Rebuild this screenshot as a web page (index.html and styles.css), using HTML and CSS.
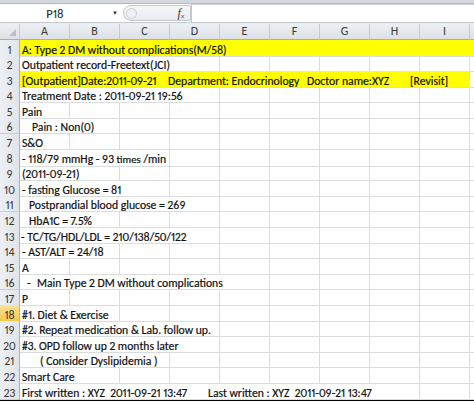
FILE: index.html
```html
<!DOCTYPE html>
<html>
<head>
<meta charset="utf-8">
<link rel="stylesheet" href="styles.css">
</head>
<body>
<div class="app">
  <div class="topstrip"></div>
  <div class="fbar">
    <div class="namebox"><span class="nb-text">P18</span><span class="nb-arrow">&#9660;</span></div>
    <div class="fxgroup">
      <span class="grip"></span>
      <span class="fx">f<sub>x</sub></span>
    </div>
    <div class="finput"></div>
  </div>
  <div class="sep"></div>
  <div class="sheet">
    <div class="row hdr">
      <div class="corner"><span class="tri"></span></div>
      <div class="ch">A</div><div class="ch">B</div><div class="ch">C</div><div class="ch">D</div><div class="ch">E</div><div class="ch">F</div><div class="ch">G</div><div class="ch">H</div><div class="ch">I</div><div class="ch last"></div>
    </div>

    <div class="row"><div class="rh">1</div><div class="c yellow s10">A: Type 2 DM without complications(M/58)</div></div>
    <div class="row"><div class="rh">2</div><div class="c s4">Outpatient record-Freetext(JCI)</div><div class="c"></div><div class="c"></div><div class="c"></div><div class="c"></div><div class="c"></div><div class="c last"></div></div>
    <div class="row"><div class="rh">3</div><div class="c yellow s9"><span class="w1">[Outpatient]Date:2011-09-21</span><span class="w2">Department: Endocrinology</span><span class="w3">Doctor name:XYZ</span><span>[Revisit]</span></div><div class="c last"></div></div>
    <div class="row"><div class="rh">4</div><div class="c s4">Treatment Date : 2011-09-21 19:56</div><div class="c"></div><div class="c"></div><div class="c"></div><div class="c"></div><div class="c"></div><div class="c last"></div></div>
    <div class="row"><div class="rh">5</div><div class="c">Pain</div><div class="c"></div><div class="c"></div><div class="c"></div><div class="c"></div><div class="c"></div><div class="c"></div><div class="c"></div><div class="c"></div><div class="c last"></div></div>
    <div class="row"><div class="rh">6</div><div class="c s2 i1">Pain : Non(0)</div><div class="c"></div><div class="c"></div><div class="c"></div><div class="c"></div><div class="c"></div><div class="c"></div><div class="c"></div><div class="c last"></div></div>
    <div class="row"><div class="rh">7</div><div class="c">S&amp;O</div><div class="c"></div><div class="c"></div><div class="c"></div><div class="c"></div><div class="c"></div><div class="c"></div><div class="c"></div><div class="c"></div><div class="c last"></div></div>
    <div class="row"><div class="rh">8</div><div class="c s3">- 118/79 mmHg - 93 <span class="sm">times</span> /min</div><div class="c"></div><div class="c"></div><div class="c"></div><div class="c"></div><div class="c"></div><div class="c"></div><div class="c last"></div></div>
    <div class="row"><div class="rh">9</div><div class="c s2">(2011-09-21)</div><div class="c"></div><div class="c"></div><div class="c"></div><div class="c"></div><div class="c"></div><div class="c"></div><div class="c"></div><div class="c last"></div></div>
    <div class="row"><div class="rh">10</div><div class="c s3">- fasting Glucose = 81</div><div class="c"></div><div class="c"></div><div class="c"></div><div class="c"></div><div class="c"></div><div class="c"></div><div class="c last"></div></div>
    <div class="row"><div class="rh">11</div><div class="c s4 i2">Postprandial blood glucose = 269</div><div class="c"></div><div class="c"></div><div class="c"></div><div class="c"></div><div class="c"></div><div class="c last"></div></div>
    <div class="row"><div class="rh">12</div><div class="c s2 i2">HbA1C = 7.5%</div><div class="c"></div><div class="c"></div><div class="c"></div><div class="c"></div><div class="c"></div><div class="c"></div><div class="c"></div><div class="c last"></div></div>
    <div class="row"><div class="rh">13</div><div class="c s4 i0">- TC/TG/HDL/LDL = 210/138/50/122</div><div class="c"></div><div class="c"></div><div class="c"></div><div class="c"></div><div class="c"></div><div class="c last"></div></div>
    <div class="row"><div class="rh">14</div><div class="c s2">- AST/ALT = 24/18</div><div class="c"></div><div class="c"></div><div class="c"></div><div class="c"></div><div class="c"></div><div class="c"></div><div class="c"></div><div class="c last"></div></div>
    <div class="row"><div class="rh">15</div><div class="c">A</div><div class="c"></div><div class="c"></div><div class="c"></div><div class="c"></div><div class="c"></div><div class="c"></div><div class="c"></div><div class="c"></div><div class="c last"></div></div>
    <div class="row"><div class="rh">16</div><div class="c s5 i3"><span class="w4">-</span><span>Main Type 2 DM without complications</span></div><div class="c"></div><div class="c"></div><div class="c"></div><div class="c"></div><div class="c last"></div></div>
    <div class="row"><div class="rh">17</div><div class="c">P</div><div class="c"></div><div class="c"></div><div class="c"></div><div class="c"></div><div class="c"></div><div class="c"></div><div class="c"></div><div class="c"></div><div class="c last"></div></div>
    <div class="row"><div class="rh sel">18</div><div class="c s2">#1. Diet &amp; Exercise</div><div class="c"></div><div class="c"></div><div class="c"></div><div class="c"></div><div class="c"></div><div class="c"></div><div class="c"></div><div class="c last"></div></div>
    <div class="row"><div class="rh">19</div><div class="c s4">#2. Repeat medication &amp; Lab. follow up.</div><div class="c"></div><div class="c"></div><div class="c"></div><div class="c"></div><div class="c"></div><div class="c last"></div></div>
    <div class="row"><div class="rh">20</div><div class="c s4">#3. OPD follow up 2 months later</div><div class="c"></div><div class="c"></div><div class="c"></div><div class="c"></div><div class="c"></div><div class="c last"></div></div>
    <div class="row"><div class="rh">21</div><div class="c s3 i4">( Consider Dyslipidemia )</div><div class="c"></div><div class="c"></div><div class="c"></div><div class="c"></div><div class="c"></div><div class="c"></div><div class="c last"></div></div>
    <div class="row"><div class="rh">22</div><div class="c s2">Smart Care</div><div class="c"></div><div class="c"></div><div class="c"></div><div class="c"></div><div class="c"></div><div class="c"></div><div class="c"></div><div class="c last"></div></div>
    <div class="row final"><div class="rh">23</div><div class="c s8"><span class="w5">First written : XYZ&nbsp; 2011-09-21 13:47</span><span>Last written : XYZ&nbsp; 2011-09-21 13:47</span></div><div class="c"></div><div class="c last"></div></div>
  </div>
</div>
</body>
</html>
```

FILE: styles.css
```css
* { box-sizing: border-box; }
html, body { margin: 0; padding: 0; background: #ffffff; }
.app {
  width: 474px;
  height: 405px;
  overflow: hidden;
  font-family: "Carlito", "Lato", "Liberation Sans", sans-serif;
  font-variant-numeric: proportional-nums;
  color: #111;
}
.topstrip {
  height: 4px;
  background: #d3d8de;
  border-bottom: 1px solid #b4bac2;
}
.fbar {
  height: 18px;
  display: flex;
  align-items: stretch;
  background: #ffffff;
}
.namebox {
  width: 123px;
  display: flex;
  align-items: center;
  font-size: 12.5px;
}
.nb-text { width: 110px; text-align: center; color: #222; }
.nb-arrow { font-size: 6px; color: #333; margin-left: 2px; }
.fxgroup {
  width: 68px;
  margin: 1px 0;
  border: 1px solid #c3c8cf;
  border-radius: 8px 0 0 8px;
  background: linear-gradient(#f6f7f9, #e7eaee);
  display: flex;
  align-items: center;
  justify-content: space-between;
  padding: 0 6px 0 2px;
}
.grip {
  width: 11px; height: 11px;
  border-radius: 50%;
  border: 1px solid #c9cdd3;
  background: #eef0f3;
}
.fx {
  font-family: "Liberation Serif", serif;
  font-style: italic;
  font-size: 12px;
  color: #333;
}
.fx sub { font-size: 7px; vertical-align: -1px; }
.finput {
  flex: 1;
  border-top: 1px solid #d0d4da;
  border-left: 1px solid #c3c8cf;
  background: #fff;
}
.sep {
  height: 2px;
  background: #c6cbd2;
  border-bottom: 1px solid #e9ecef;
}
.row {
  display: grid;
  grid-template-columns: 20px repeat(9, 50px) 1fr;
  height: 15.6px;
  font-size: 11.7px;
  line-height: 12px;
}
.row.hdr { height: 16px; }
.corner, .ch {
  background: linear-gradient(#eceff3, #dde1e6);
  border-right: 1px solid #c5cad1;
  border-bottom: 1px solid #a9b0b9;
  color: #3a3a3a;
  text-align: center;
  font-size: 12px;
  line-height: 15px;
}
.corner { position: relative; }
.tri {
  position: absolute; right: 3px; bottom: 3px;
  width: 0; height: 0;
  border-left: 7px solid transparent;
  border-bottom: 7px solid #b9bfc7;
}
.ch.last { border-right: none; }
.rh {
  background: linear-gradient(90deg, #eceff3, #e1e5ea);
  border-right: 1px solid #a9b0b9;
  border-bottom: 1px solid #c9ced5;
  color: #333;
  text-align: center;
  font-size: 11.7px;
  padding-top: 3.5px;
}
.rh.sel { background: linear-gradient(#fbe29a, #f5c748); color: #333; border-bottom-color: #e3b33c; }
.c {
  border-right: 1px solid #dadcde;
  border-bottom: 1px solid #dadcde;
  white-space: nowrap;
  overflow: visible;
  padding-left: 2px;
  padding-top: 3.5px;
  -webkit-text-stroke: 0.2px #111;
}
.c.last { border-right: none; }
.yellow { background: #ffff00; }
.s2 { grid-column: span 2; }
.s3 { grid-column: span 3; }
.s4 { grid-column: span 4; }
.s5 { grid-column: span 5; }
.s8 { grid-column: span 8; }
.s9 { grid-column: span 9; }
.s10 { grid-column: span 10; border-right: none; }
.i0 { padding-left: 1px; }
.i1 { padding-left: 12px; }
.i2 { padding-left: 9px; }
.i3 { padding-left: 7px; }
.i4 { padding-left: 20px; }
.w1 { display: inline-block; width: 146px; }
.w2 { display: inline-block; width: 139px; }
.w3 { display: inline-block; width: 103px; }
.w4 { display: inline-block; width: 10px; }
.w5 { display: inline-block; width: 186px; }
.sm { font-size: 10.8px; }
.row.final { height: 17.6px; }
.final { border-bottom: 2px solid #000; }
```
